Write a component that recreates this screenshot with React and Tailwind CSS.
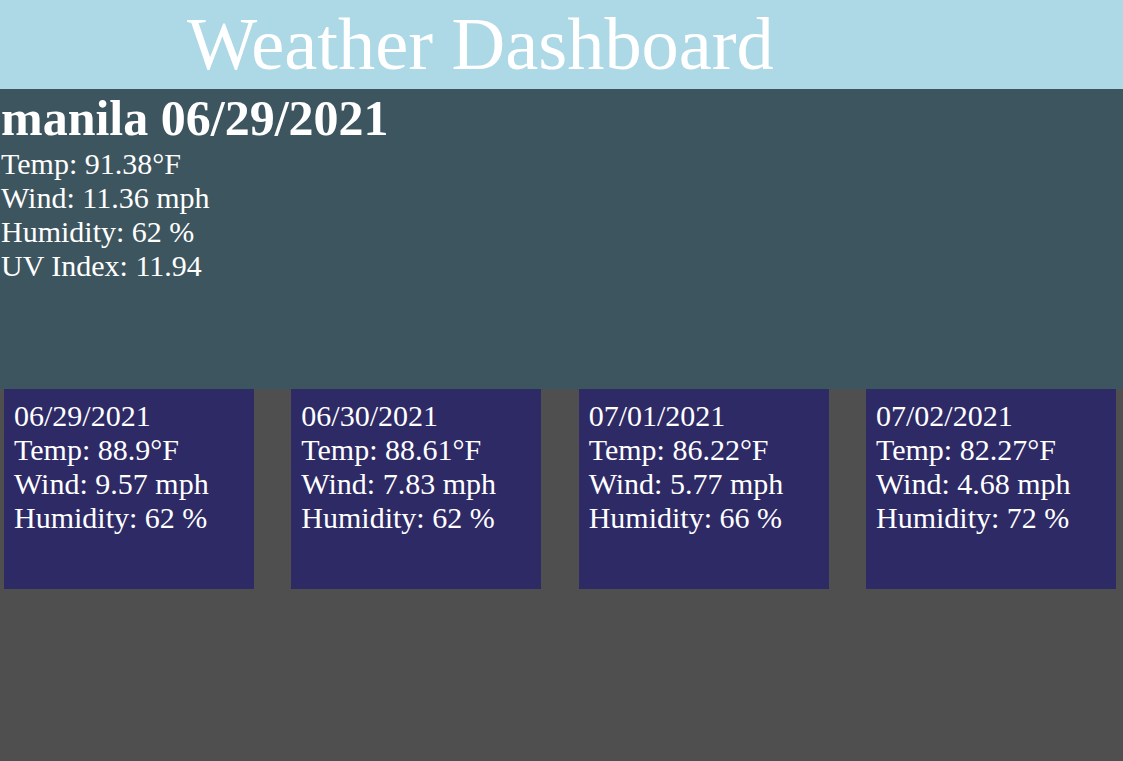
import React from 'react';

const current = {
  city: 'manila',
  date: '06/29/2021',
  temp: '91.38',
  wind: '11.36',
  humidity: '62',
  uv: '11.94'
};

const forecast = [
  { date: '06/29/2021', temp: '88.9', wind: '9.57', humidity: '62' },
  { date: '06/30/2021', temp: '88.61', wind: '7.83', humidity: '62' },
  { date: '07/01/2021', temp: '86.22', wind: '5.77', humidity: '66' },
  { date: '07/02/2021', temp: '82.27', wind: '4.68', humidity: '72' }
];

const App = () => {
  return (
    <div className="min-h-screen bg-[#4f4f4f] text-white font-['Liberation_Serif','Times_New_Roman',serif]">
      <header className="h-[89px] bg-[#add8e6] pl-[187px]">
        <h1 className="text-[74.4px] leading-[89px] font-normal">Weather Dashboard</h1>
      </header>

      <section className="h-[300px] bg-[#3d555e] px-[1px]">
        <h2 className="text-[50px] font-bold leading-[55px] pt-[2px]">
          {current.city} {current.date}
        </h2>
        <div className="text-[30px] leading-[34px] mt-[1px]">
          <p>Temp: {current.temp}°F</p>
          <p>Wind: {current.wind} mph</p>
          <p>Humidity: {current.humidity} %</p>
          <p>UV Index: {current.uv}</p>
        </div>
      </section>

      <div className="flex justify-between pl-[4px] pr-[7px]">
        {forecast.map((day) => (
          <div
            key={day.date}
            className="w-[250px] h-[200px] bg-[#2e2a66] pl-[10px] pt-[10px] text-[30px] leading-[34px]"
          >
            <p>{day.date}</p>
            <p>Temp: {day.temp}°F</p>
            <p>Wind: {day.wind} mph</p>
            <p>Humidity: {day.humidity} %</p>
          </div>
        ))}
      </div>
    </div>
  );
};

export default App;
